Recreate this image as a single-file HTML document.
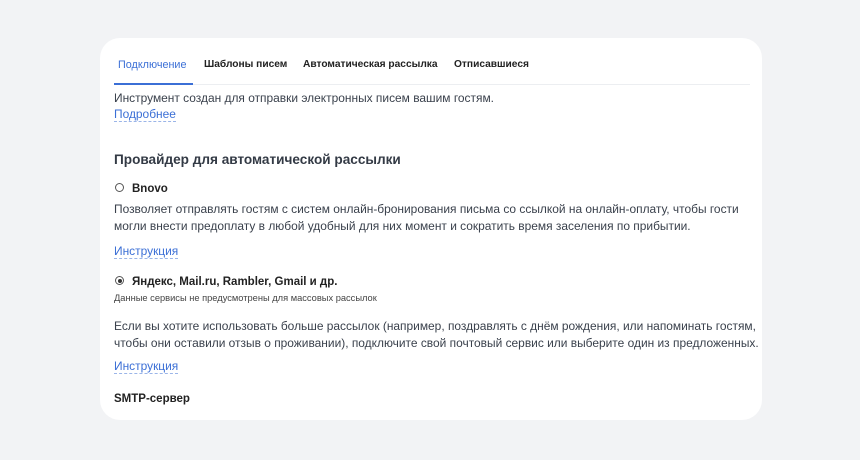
<!DOCTYPE html>
<html><head><meta charset="utf-8"><style>
*{margin:0;padding:0;box-sizing:border-box}
body{width:860px;height:460px;background:#f2f3f5;font-family:"Liberation Sans",sans-serif;color:#333a45;position:relative;overflow:hidden}
.card{position:absolute;left:100px;top:38px;width:662px;height:382px;background:#fff;border-radius:20px}
.a{position:absolute;white-space:nowrap}
.t{font-size:10.2px;font-weight:bold;color:#222;top:21px}
.p{font-size:11.95px;color:#3a414c}
.l{font-size:11.95px;color:#3b6fd6;border-bottom:1px dashed #9bb5e8;line-height:14px}
.r{width:9px;height:9px;border:1px solid #555;border-radius:50%}
</style></head><body>
<div class="card">
<div class="a t" style="left:18px;color:#3b6fd6;font-weight:normal;font-size:10.8px">Подключение</div>
<div class="a t" style="left:104px">Шаблоны писем</div>
<div class="a t" style="left:203px">Автоматическая рассылка</div>
<div class="a t" style="left:354px">Отписавшиеся</div>
<div class="a" style="left:14px;top:46px;width:636px;height:1px;background:#eceef1"></div>
<div class="a" style="left:14px;top:45px;width:79px;height:2px;background:#3b6fd6"></div>
<div class="a p" style="left:14px;top:53px">Инструмент создан для отправки электронных писем вашим гостям.</div>
<div class="a l" style="left:14px;top:69px">Подробнее</div>
<div class="a" style="left:14px;top:114px;font-size:13.6px;font-weight:bold;color:#333a45">Провайдер для автоматической рассылки</div>
<div class="a r" style="left:15px;top:145px"></div>
<div class="a" style="left:32px;top:145px;font-size:11.5px;font-weight:bold;color:#222">Bnovo</div>
<div class="a p" style="left:14px;top:163px;line-height:17px">Позволяет отправлять гостям с систем онлайн-бронирования письма со ссылкой на онлайн-оплату, чтобы гости<br>могли внести предоплату в любой удобный для них момент и сократить время заселения по прибытии.</div>
<div class="a l" style="left:14px;top:206px">Инструкция</div>
<div class="a r" style="left:15px;top:238px"></div>
<div class="a" style="left:17.5px;top:240.5px;width:4px;height:4px;border-radius:50%;background:#333"></div>
<div class="a" style="left:32px;top:238px;font-size:11.5px;font-weight:bold;color:#222">Яндекс, Mail.ru, Rambler, Gmail и др.</div>
<div class="a" style="left:14px;top:255px;font-size:9.3px;color:#444">Данные сервисы не предусмотрены для массовых рассылок</div>
<div class="a p" style="left:14px;top:280px;line-height:17px">Если вы хотите использовать больше рассылок (например, поздравлять с днём рождения, или напоминать гостям,<br>чтобы они оставили отзыв о проживании), подключите свой почтовый сервис или выберите один из предложенных.</div>
<div class="a l" style="left:14px;top:321px">Инструкция</div>
<div class="a" style="left:14px;top:355px;font-size:11.5px;font-weight:bold;color:#222">SMTP-сервер</div>
</div>
</body></html>
